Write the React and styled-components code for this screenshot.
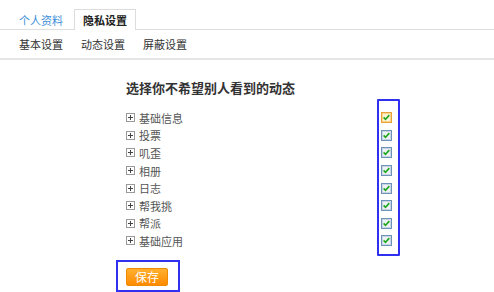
import React from 'react';
import { styled, createGlobalStyle } from 'styled-components';

const GlobalStyle = createGlobalStyle`
  body {
    margin: 0;
    background: #fff;
    font-family: "Noto Sans CJK SC", "DejaVu Sans", sans-serif;
    font-size: 11px;
    color: #333;
  }
`;

const TabBar = styled.div`
  display: flex;
  align-items: flex-end;
  height: 29px;
  padding-left: 10px;
  border-bottom: 1px solid #dedede;
`;

const Tab = styled.div`
  height: ${p => (p.$active ? '21px' : '20px')};
  line-height: 20px;
  padding: 0 8px;
  margin-bottom: ${p => (p.$active ? '-1px' : '0')};
  margin-right: 2px;
  border: 1px solid ${p => (p.$active ? '#dcdcdc' : 'transparent')};
  border-bottom: none;
  background: #fff;
  color: ${p => (p.$active ? '#222' : '#3d8fd8')};
  font-weight: ${p => (p.$active ? 'bold' : 'normal')};
  font-size: 11px;
  box-sizing: border-box;
`;

const SubNav = styled.div`
  display: flex;
  align-items: center;
  height: 28px;
  padding-left: 19px;
  gap: 18px;
  border-bottom: 2px solid #e6e6e6;
`;

const SubItem = styled.div`
  color: #333;
  font-size: 11px;
`;

const Content = styled.div`
  padding: 19px 0 0 126px;
`;

const Heading = styled.div`
  font-size: 13px;
  font-weight: bold;
  line-height: 18px;
  color: #333;
  margin-bottom: 2px;
`;

const Columns = styled.div`
  display: flex;
`;

const List = styled.div`
  width: 251px;
  padding-top: 10px;
`;

const Row = styled.div`
  display: flex;
  align-items: center;
  height: 17.6px;
  gap: 4px;
  color: #555;
  font-size: 11px;
`;

const CheckColumn = styled.div`
  width: 17px;
  border: 2px solid #3030f0;
  border-radius: 1px;
  padding: 8px 0 3.8px 2px;
`;

const CheckCell = styled.div`
  display: flex;
  align-items: center;
  height: 17.6px;
`;

const SaveFrame = styled.div`
  width: 44px;
  margin: 4px 0 0 -10px;
  border: 2px solid #3030f0;
  padding: 6px 8px 4px 8px;
`;

const SaveButton = styled.button`
  width: 42px;
  height: 18px;
  padding: 0;
  border: 1px solid #f08a00;
  border-radius: 2px;
  background: linear-gradient(#ffb030, #ff8a00);
  color: #fff;
  font-family: inherit;
  font-size: 12px;
  line-height: 16px;
`;

const PlusBox = () => (
  <svg width="9" height="9" viewBox="0 0 9 9">
    <rect x="0.5" y="0.5" width="8" height="8" fill="#fff" stroke="#9a9a9a" />
    <path d="M2 4.5h5M4.5 2v5" stroke="#444" strokeWidth="1" />
  </svg>
);

const CheckBox = ({ hover }) => (
  <svg width="11" height="11" viewBox="0 0 11 11">
    <rect x="0.5" y="0.5" width="10" height="10" fill={hover ? '#fff3d6' : '#eef2f6'} stroke={hover ? '#e8a23a' : '#6f93b8'} />
    <rect x="1.5" y="1.5" width="8" height="8" fill="none" stroke={hover ? '#fbd48a' : '#c8d6e4'} />
    <path d="M2.6 5.4l1.9 1.9 3.8-4.2" fill="none" stroke="#1fa61f" strokeWidth="1.6" />
  </svg>
);

const items = ['基础信息', '投票', '叽歪', '相册', '日志', '帮我挑', '帮派', '基础应用'];

export default function App() {
  return (
    <>
      <GlobalStyle />
      <TabBar>
        <Tab>个人资料</Tab>
        <Tab $active>隐私设置</Tab>
      </TabBar>
      <SubNav>
        <SubItem>基本设置</SubItem>
        <SubItem>动态设置</SubItem>
        <SubItem>屏蔽设置</SubItem>
      </SubNav>
      <Content>
        <Heading>选择你不希望别人看到的动态</Heading>
        <Columns>
          <List>
            {items.map(name => (
              <Row key={name}>
                <PlusBox />
                {name}
              </Row>
            ))}
          </List>
          <CheckColumn>
            {items.map((name, i) => (
              <CheckCell key={name}>
                <CheckBox hover={i === 0} />
              </CheckCell>
            ))}
          </CheckColumn>
        </Columns>
        <SaveFrame>
          <SaveButton>保存</SaveButton>
        </SaveFrame>
      </Content>
    </>
  );
}
